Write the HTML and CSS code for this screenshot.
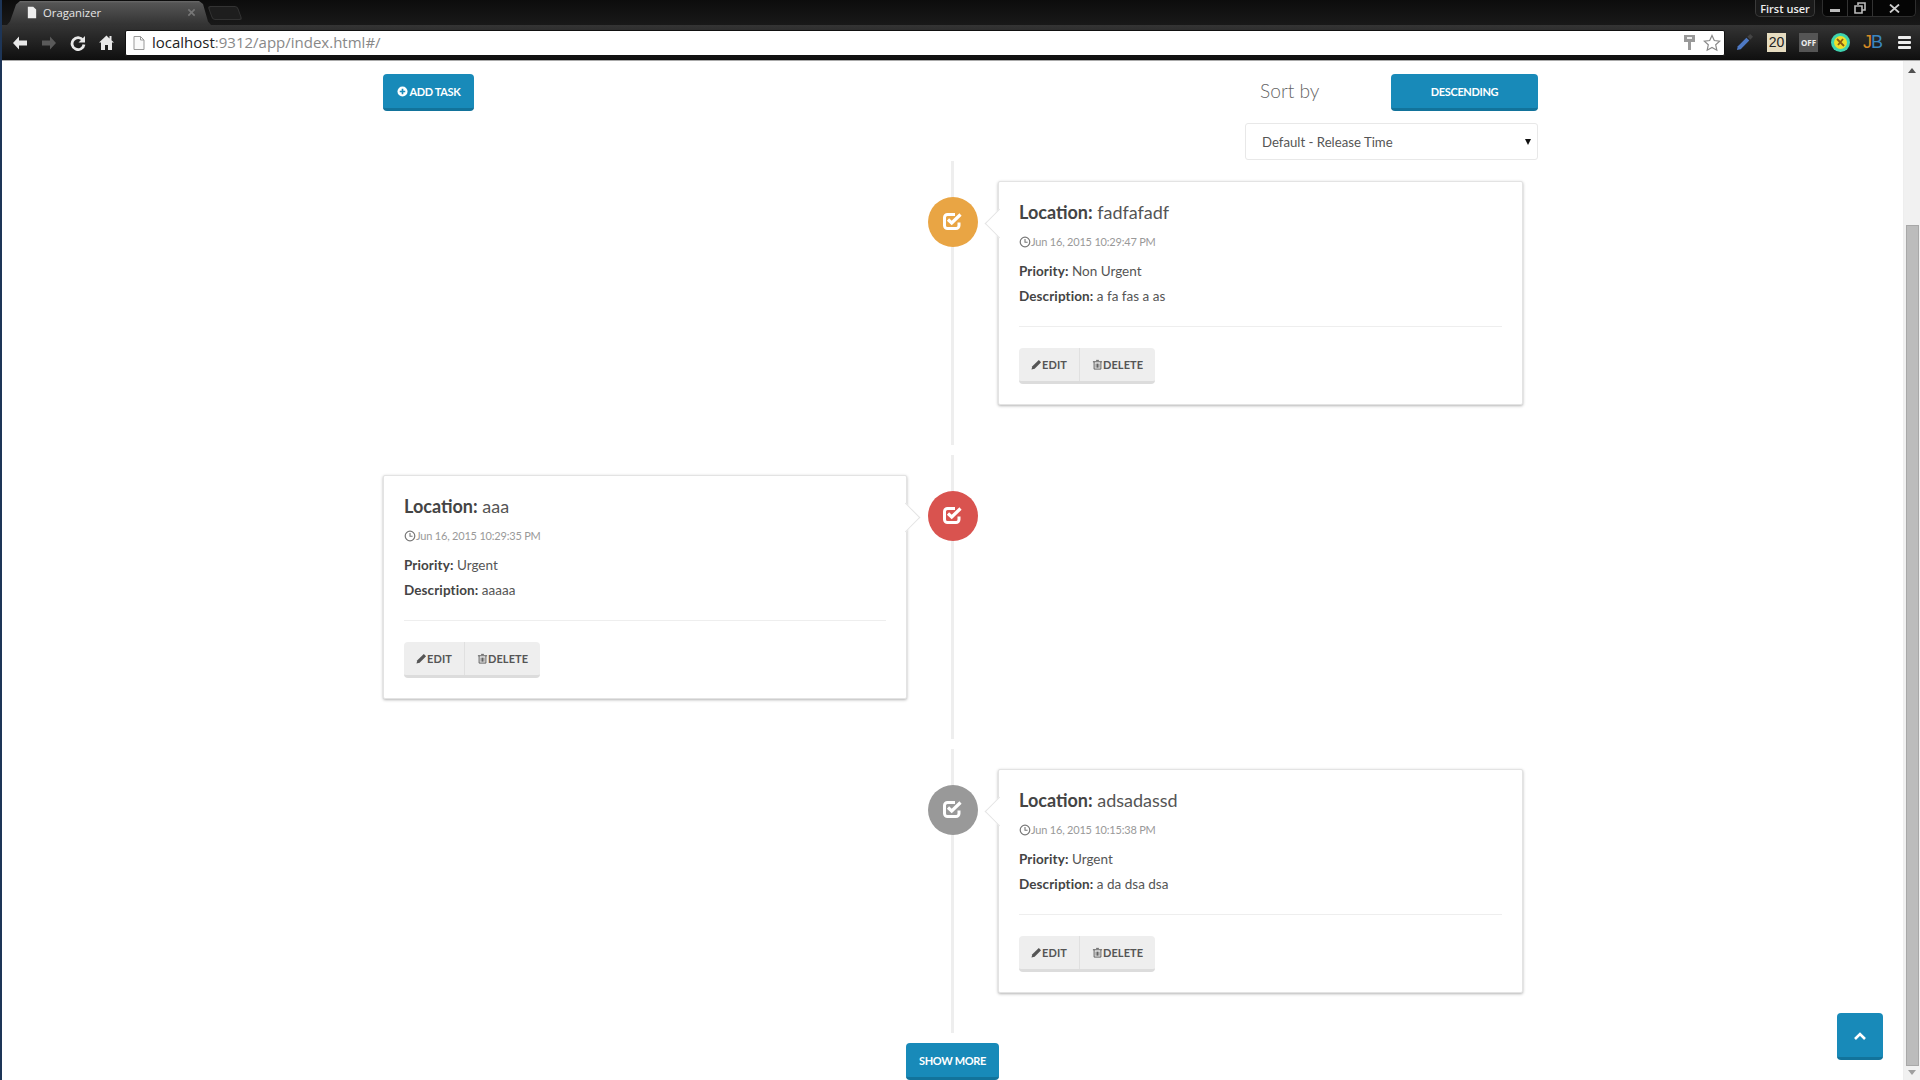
FILE: index.html
```html
<!DOCTYPE html>
<html lang="en">
<head>
<meta charset="utf-8">
<title>Oraganizer</title>
<link rel="stylesheet" href="styles.css">
</head>
<body>
<svg class="defs" width="0" height="0" aria-hidden="true">
  <symbol id="i-check" viewBox="0 0 20 18"><path d="M16 10.500V13.500a3 3 0 0 1-3 3H4.500a3 3 0 0 1-3-3V5.500a3 3 0 0 1 3-3H12" fill="none" stroke="#fff" stroke-width="3"/><path d="M5 7.500 8.700 11 17.500 2.500" fill="none" stroke="#fff" stroke-width="3.200"/></symbol>
  <symbol id="i-clock" viewBox="0 0 12 12"><circle cx="6" cy="6" r="4.800" fill="none" stroke="#777" stroke-width="1.200"/><path d="M6 3v3.300h2.600" fill="none" stroke="#777" stroke-width="1.100"/></symbol>
  <symbol id="i-pencil" viewBox="0 0 12 12"><path d="M0.500 11.500 1.500 8 8.500 1l2.500 2.500-7 7z" fill="#555"/></symbol>
  <symbol id="i-trash" viewBox="0 0 12 12"><path d="M4.500 1.500h3M1 3h10M2.300 3v8h7.400V3M4.500 5v4.500M6 5v4.500M7.500 5v4.500" fill="none" stroke="#555" stroke-width="1"/></symbol>
  <symbol id="i-plus" viewBox="0 0 12 12"><circle cx="6" cy="6" r="5.500" fill="#fff"/><path d="M6 3v6M3 6h6" stroke="#188ab9" stroke-width="1.800"/></symbol>
</svg>
<div class="desktop"></div>
<div class="window">
  <header class="tabstrip">
    <div class="tab">
      <svg class="tab-icon" width="10" height="13" viewBox="0 0 12 14"><path d="M1 0h6.500L11 3.500V14H1z" fill="#eee"/></svg>
      <span class="tab-title">Oraganizer</span>
      <svg class="tab-close" width="9" height="9" viewBox="0 0 10 10"><path d="M1.500 1.500l7 7M8.500 1.500l-7 7" stroke="#777" stroke-width="1.800"/></svg>
    </div>
    <div class="new-tab"></div>
    <div class="strip-spacer"></div>
    <div class="profile">First user</div>
    <div class="win-controls">
      <span class="win-btn"><svg width="12" height="10" viewBox="0 0 12 10"><rect x="1" y="6" width="10" height="3" fill="#bbb"/></svg></span>
      <span class="win-btn"><svg width="12" height="12" viewBox="0 0 12 12"><path d="M4 3V1h7v7H8M1 4h7v7H1z" fill="none" stroke="#bbb" stroke-width="1.600"/></svg></span>
      <span class="win-btn win-close"><svg width="11" height="9" viewBox="0 0 11 9"><path d="M1 0.500l9 8M10 0.500l-9 8" stroke="#ccc" stroke-width="1.800"/></svg></span>
    </div>
  </header>
  <nav class="toolbar">
    <div class="nav-icons">
      <svg width="16" height="14" viewBox="0 0 16 14"><path d="M7 0.500 1 7l6 6.500V9.500h8v-5H7z" fill="#e8e8e8"/></svg>
      <svg width="16" height="14" viewBox="0 0 16 14"><path d="M9 0.500 15 7l-6 6.500V9.500H1v-5h8z" fill="#5a5a5a"/></svg>
      <svg width="16" height="16" viewBox="0 0 16 16"><path d="M13 5.200A6 6 0 1 0 14 9.500" fill="none" stroke="#e8e8e8" stroke-width="2.800"/><path d="M15 1v6.500H8.500z" fill="#e8e8e8"/></svg>
      <svg width="15" height="15" viewBox="0 0 15 15"><path d="M7.500 0.500 0 7.500h2V15h4v-5h3v5h4V7.500h2l-2.500-2.300V1h-2v2.400z" fill="#e8e8e8"/></svg>
    </div>
    <div class="omnibox">
      <svg class="page-icon" width="12" height="14" viewBox="0 0 12 14"><path d="M1 .5h6.500L11 4v9.500H1zM7.500 .5V4H11" fill="#fafafa" stroke="#999"/></svg>
      <span class="url"><span class="url-host">localhost</span>:9312/app/index.html#/</span>
      <svg class="key" width="11" height="16" viewBox="0 0 11 16"><path d="M0 0h11v7H7v8H4V7H0z" fill="#999"/><rect x="3" y="2" width="5" height="2" fill="#eee"/></svg>
      <svg class="star" width="18" height="18" viewBox="0 0 18 18"><path d="M9 1.500l2.300 5 5.400.6-4 3.700 1.100 5.400L9 13.500 4.200 16.200l1.100-5.400-4-3.700 5.400-.6z" fill="#fff" stroke="#888" stroke-width="1.200"/></svg>
    </div>
    <div class="ext-icons">
      <svg width="19" height="19" viewBox="0 0 20 20"><path d="M2 18l1-4 9-9 3 3-9 9z" fill="#4e79c4"/><path d="M13 4l3-3 3 3-3 3z" fill="#444"/></svg>
      <span class="ext-count">20</span>
      <span class="ext-off">OFF</span>
      <span class="ext-dot"><svg width="19" height="19" viewBox="0 0 19 19"><circle cx="9.500" cy="9.500" r="9.500" fill="#3ed4b0"/><circle cx="9.500" cy="9.500" r="6.500" fill="#efe02a"/><path d="M6 6l7 7M12 6l-5 6" stroke="#8a5a10" stroke-width="1.800"/></svg></span>
      <span class="ext-jb"><span class="jb-j">J</span><span class="jb-b">B</span></span>
      <span class="menu"><i></i><i></i><i></i></span>
    </div>
  </nav>
  <div class="viewport">
    <main class="page">
      <div class="container">
        <div class="top-row">
          <button class="btn btn-add"><svg class="ico" width="11" height="11"><use href="#i-plus"/></svg>ADD TASK</button>
          <div class="sort">
            <div class="sort-line">
              <span class="sort-label">Sort by</span>
              <button class="btn btn-desc">DESCENDING</button>
            </div>
            <div class="select"><span>Default - Release Time</span><i class="caret"></i></div>
          </div>
        </div>
        <div class="timeline">
          <article class="row">
            <div class="side"></div>
            <div class="axis"><span class="badge badge-orange"><svg width="20" height="18"><use href="#i-check"/></svg></span></div>
            <section class="card card-right">
              <h3 class="card-title"><b>Location:</b> fadfafadf</h3>
              <p class="card-date"><svg width="12" height="12"><use href="#i-clock"/></svg>Jun 16, 2015 10:29:47 PM</p>
              <p class="card-line first"><b>Priority:</b> Non Urgent</p>
              <p class="card-line"><b>Description:</b> a fa fas a as</p>
              <hr class="card-rule">
              <div class="btn-group">
                <button class="gbtn gbtn-edit"><svg width="11" height="11"><use href="#i-pencil"/></svg>EDIT</button>
                <button class="gbtn"><svg width="11" height="11"><use href="#i-trash"/></svg>DELETE</button>
              </div>
            </section>
          </article>
          <article class="row">
            <section class="card card-left">
              <h3 class="card-title"><b>Location:</b> aaa</h3>
              <p class="card-date"><svg width="12" height="12"><use href="#i-clock"/></svg>Jun 16, 2015 10:29:35 PM</p>
              <p class="card-line first"><b>Priority:</b> Urgent</p>
              <p class="card-line"><b>Description:</b> aaaaa</p>
              <hr class="card-rule">
              <div class="btn-group">
                <button class="gbtn gbtn-edit"><svg width="11" height="11"><use href="#i-pencil"/></svg>EDIT</button>
                <button class="gbtn"><svg width="11" height="11"><use href="#i-trash"/></svg>DELETE</button>
              </div>
            </section>
            <div class="axis"><span class="badge badge-red"><svg width="20" height="18"><use href="#i-check"/></svg></span></div>
            <div class="side"></div>
          </article>
          <article class="row">
            <div class="side"></div>
            <div class="axis"><span class="badge badge-gray"><svg width="20" height="18"><use href="#i-check"/></svg></span></div>
            <section class="card card-right">
              <h3 class="card-title"><b>Location:</b> adsadassd</h3>
              <p class="card-date"><svg width="12" height="12"><use href="#i-clock"/></svg>Jun 16, 2015 10:15:38 PM</p>
              <p class="card-line first"><b>Priority:</b> Urgent</p>
              <p class="card-line"><b>Description:</b> a da dsa dsa</p>
              <hr class="card-rule">
              <div class="btn-group">
                <button class="gbtn gbtn-edit"><svg width="11" height="11"><use href="#i-pencil"/></svg>EDIT</button>
                <button class="gbtn"><svg width="11" height="11"><use href="#i-trash"/></svg>DELETE</button>
              </div>
            </section>
          </article>
        </div>
        <div class="more"><button class="btn btn-more">SHOW MORE</button></div>
      </div>
      <button class="btn to-top" aria-label="Back to top"><svg width="12" height="8" viewBox="0 0 12 8"><path d="M1 7l5-5 5 5" fill="none" stroke="#fff" stroke-width="2.600"/></svg></button>
    </main>
    <aside class="scrollbar">
      <i class="sb-up"></i>
      <div class="sb-track"><div class="sb-thumb"></div></div>
      <i class="sb-down"></i>
    </aside>
  </div>
</div>
</body>
</html>
```

FILE: styles.css
```css
* { box-sizing: border-box; }
html, body { margin: 0; height: 100%; overflow: hidden; }
body { display: flex; font-family: "Lato", "Open Sans", sans-serif; color: #555; background: #fff; }
.defs { position: absolute; }
svg { display: block; flex: none; }

.desktop { width: 2px; background: #1d3557; }
.window { flex: 1; min-width: 0; display: flex; flex-direction: column; }

.tabstrip { height: 25px; display: flex; align-items: flex-start; background: linear-gradient(#0c0c0c, #191919); font-family: "Open Sans", sans-serif; }
.tab { margin: 1px 0 0 5px; width: 204px; height: 24px; display: flex; align-items: center; padding: 0 15px 2px 20px; background: linear-gradient(#6a6a6a 0, #555 2px, #333 100%); clip-path: polygon(0 100%, 3px 85%, 9px 15%, 13px 0, 192px 0, 196px 12%, 201px 85%, 204px 100%); }
.tab-icon { margin-right: 6px; }
.tab-title { flex: 1; font-size: 11.300px; color: #e6e6e6; }
.new-tab { width: 30px; height: 14px; margin: 6px 0 0 -1px; background: #1e1e1e; border: 1px solid #333; border-radius: 3px; transform: skewX(20deg); }
.strip-spacer { flex: 1; }
.profile { width: 60px; height: 17px; font-size: 11px; font-weight: 600; line-height: 17px; text-align: center; color: #eee; background: #1a1a1a; border: 1px solid #3a3a3a; border-top: 0; border-radius: 0 0 5px 5px; }
.win-controls { display: flex; margin: 0 4px 0 7px; height: 17px; background: #050505; border: 1px solid #2e2e2e; border-top: 0; border-radius: 0 0 5px 5px; }
.win-btn { width: 25px; display: flex; align-items: center; justify-content: center; border-right: 1px solid #333; }
.win-close { width: 42px; border-right: 0; }

.toolbar { height: 36px; display: flex; align-items: center; background: linear-gradient(#343434, #0f0f0f); border-bottom: 1px solid #aaa; }
.nav-icons { width: 123px; display: flex; align-items: center; gap: 13px; padding-left: 10px; }
.omnibox { width: 1600px; height: 26px; display: flex; align-items: center; background: #fff; border: 1px solid #111; border-radius: 2px; padding: 0 3px 0 7px; }
.page-icon { margin-right: 7px; }
.url { flex: 1; padding-bottom: 2px; font-family: "Open Sans", sans-serif; font-size: 15px; color: #888; }
.url-host { color: #222; }
.key { margin-right: 8px; }
.ext-icons { flex: 1; display: flex; align-items: center; gap: 13px; padding-left: 10px; font-family: "Open Sans", sans-serif; }
.ext-count { width: 19px; height: 19px; background: #e6dcc0; color: #222; font-size: 14px; font-family: "Liberation Sans", sans-serif; line-height: 19px; text-align: center; }
.ext-off { width: 19px; height: 19px; background: #555; color: #eee; font-size: 8px; font-weight: 700; line-height: 19px; text-align: center; }
.ext-dot { width: 19px; }
.ext-jb { width: 19px; font-family: "Liberation Sans", sans-serif; font-size: 18px; font-weight: 400; letter-spacing: -1px; white-space: nowrap; }
.jb-j { color: #d78a25; }
.jb-b { color: #3a86c0; }
.menu { width: 13px; margin-left: 3px; display: flex; flex-direction: column; gap: 2px; }
.menu i { height: 3px; background: #eee; border-radius: 1px; }

.viewport { flex: 1; min-height: 0; display: flex; }
.page { flex: 1; min-width: 0; position: relative; padding: 13px 0 0 381px; overflow: hidden; }
.container { width: 1155px; }

.top-row { display: flex; justify-content: space-between; align-items: flex-start; }
.sort { width: 293px; }
.sort-line { display: flex; justify-content: space-between; align-items: flex-start; padding-left: 15px; }
.sort-label { font-size: 19.200px; font-weight: 300; line-height: 34px; color: #666; }
.btn { border: 0; border-bottom: 3px solid #12739b; border-radius: 4px; background: #188ab9; color: #fff; font: 700 11px/1 "Lato", sans-serif; letter-spacing: -.35px; padding: 1px 0 0; display: flex; align-items: center; justify-content: center; height: 37px; }
.btn-add { width: 91px; }
.btn-add .ico { margin-right: 2px; }
.btn-desc { width: 147px; }
.select { margin-top: 12px; height: 37px; display: flex; align-items: center; justify-content: space-between; padding: 0 6px 0 16px; border: 1px solid #e8e8e8; border-radius: 3px; font-size: 13.200px; color: #555; }
.caret { border: 3.500px solid transparent; border-top: 6px solid #111; border-bottom: 0; }

.timeline { margin-top: 1px; width: 1140px; }
.row { display: grid; grid-template-columns: 524px 91px 525px; height: 284px; margin-bottom: 10px; }
.axis { background: linear-gradient(#eee, #eee) 44px 0 / 3px 100% no-repeat; padding: 36px 0 0 21px; }
.badge { width: 50px; height: 50px; border-radius: 50%; display: flex; align-items: center; justify-content: center; padding-bottom: 2px; }
.badge-orange { background: #e9a544; }
.badge-red { background: #d9534f; }
.badge-gray { background: #999; }

.card { position: relative; margin-top: 20px; height: 224px; padding: 19px 20px 20px; background: #fff; border: 1px solid #e3e3e3; border-radius: 2px; box-shadow: 0 1px 3px rgba(0, 0, 0, .3); }
.card::before { content: ""; position: absolute; top: 31px; width: 20px; height: 20px; background: #fff; transform: rotate(45deg); border: 1px solid #e4e4e4; }
.card-right::before { left: -10px; border-top: 0; border-right: 0; }
.card-left::before { right: -10px; border-bottom: 0; border-left: 0; }
.card-title { margin: 0; font-size: 18px; font-weight: 400; line-height: 22px; color: #555; }
.card-title b, .card-line b { font-weight: 700; color: #444; }
.card-line b { letter-spacing: .1px; }
.card-date { margin: 11px 0 0; display: flex; align-items: center; font-size: 11px; letter-spacing: -.2px; line-height: 16px; color: #999; }
.card-line { margin: 5px 0 0; font-size: 13.500px; line-height: 20px; color: #555; }
.card-line.first { margin-top: 11px; }
.card-rule { margin: 20px 0 21px; height: 1px; border: 0; background: #eee; }
.btn-group { display: flex; width: max-content; height: 36px; border-bottom: 3px solid #dcdcdc; border-radius: 4px; background: #eee; }
.gbtn { height: 33px; padding: 0 12px; border: 0; background: transparent; display: flex; align-items: center; font: 700 11px/1 "Lato", sans-serif; letter-spacing: .1px; color: #555; }
.gbtn-edit { border-right: 1px solid #e0e0e0; }

.more { margin-top: 0; width: 1139px; display: flex; justify-content: center; }
.btn-more { width: 93px; }

.to-top { position: absolute; left: 1835px; top: 952px; width: 46px; height: 47px; }

.scrollbar { width: 17px; display: flex; flex-direction: column; align-items: center; background: #f1f1f1; border-left: 1px solid #eee; padding: 7px 0 5px; }
.sb-up { border: 4px solid transparent; border-bottom: 5px solid #505050; border-top: 0; }
.sb-track { flex: 1; width: 13px; padding-top: 152px; padding-bottom: 4px; display: flex; }
.sb-thumb { flex: 1; background: #bcbcbc; border: 1px solid #a8a8a8; }
.sb-down { border: 4px solid transparent; border-top: 5px solid #a0a0a0; border-bottom: 0; }
```
